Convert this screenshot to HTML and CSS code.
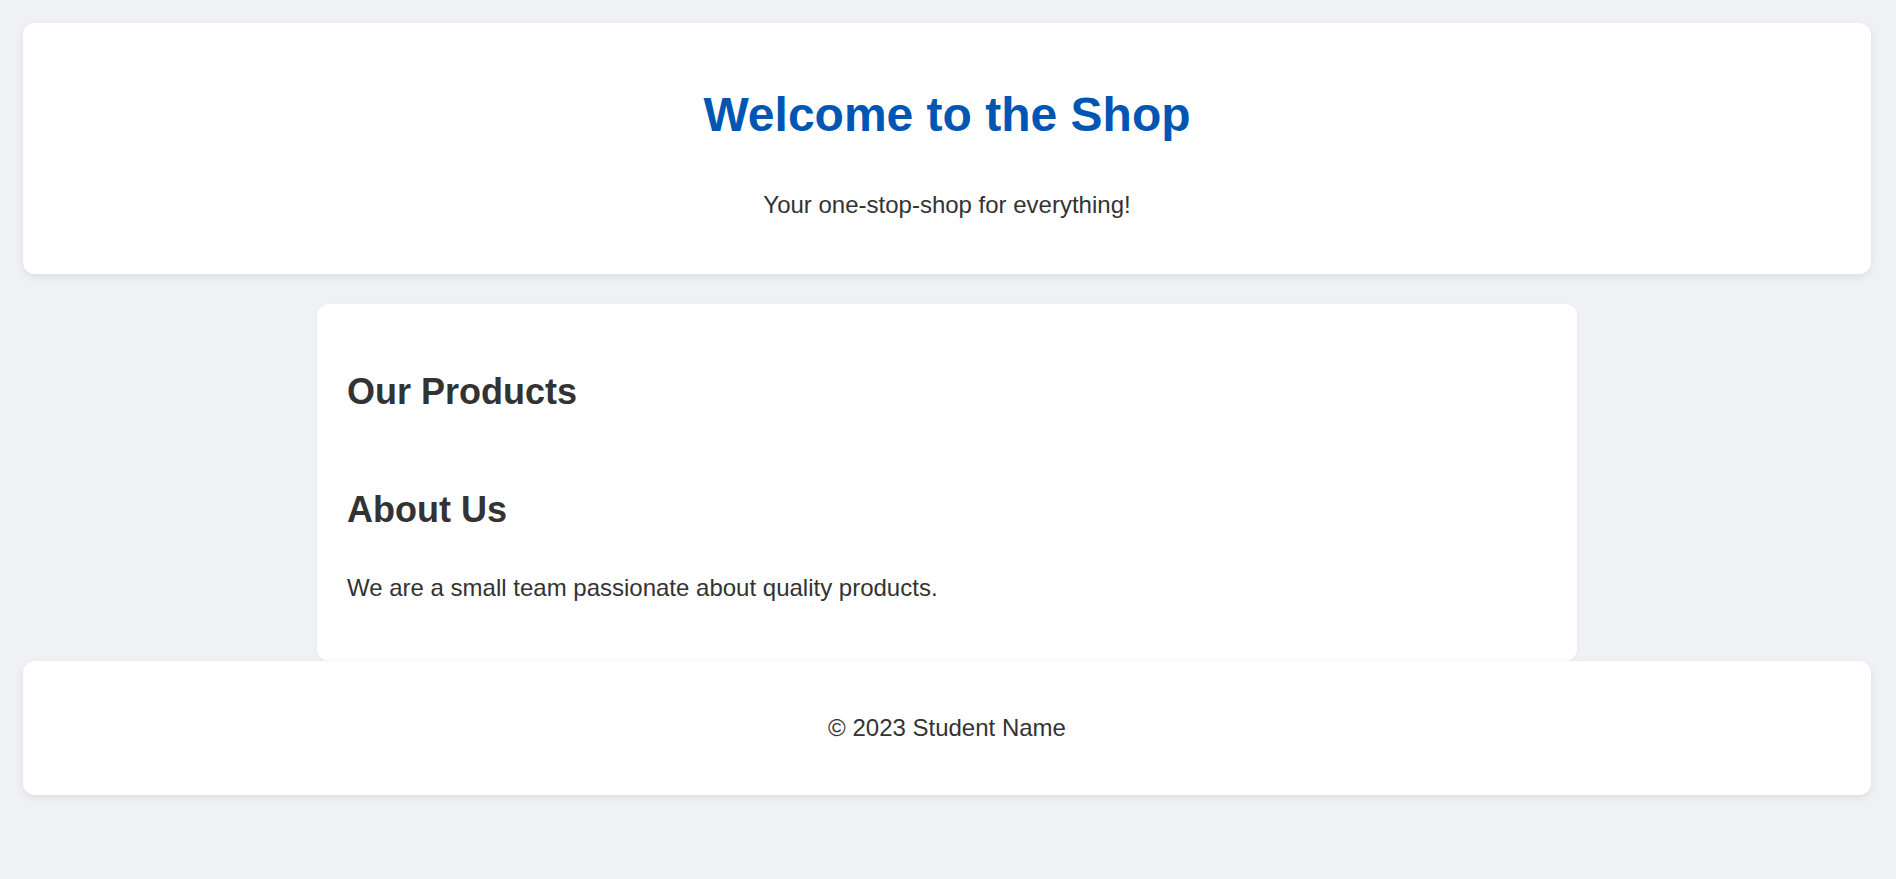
FILE: index.html
```html
<!DOCTYPE html>
<html lang="en">
<head>
<meta charset="utf-8">
<title>Welcome to the Shop</title>
<link rel="stylesheet" href="styles.css">
</head>
<body>
<div class="page">
  <header class="site-header">
    <h1 class="site-title">Welcome to the Shop</h1>
    <p class="tagline">Your one-stop-shop for everything!</p>
  </header>
  <main class="content">
    <section class="section products">
      <h2 class="section-title">Our Products</h2>
      <div class="product-grid"></div>
    </section>
    <section class="section about">
      <h2 class="section-title">About Us</h2>
      <p class="text">We are a small team passionate about quality products.</p>
    </section>
  </main>
  <footer class="site-footer">
    <p class="text">&copy; 2023 Student Name</p>
  </footer>
</div>
</body>
</html>
```

FILE: styles.css
```css
html, body {
  margin: 0;
  padding: 0;
}

body {
  background: #f0f1f5;
  color: #333333;
  font-family: "Liberation Sans", Arial, sans-serif;
  font-size: 24px;
  line-height: 1.6;
}

.page {
  padding: 22.5px 25px 22px 23px;
  display: flex;
  flex-direction: column;
  align-items: center;
}

.site-header,
.site-footer {
  align-self: stretch;
  background: #ffffff;
  border-radius: 12px;
  box-shadow: 0 3px 8px rgba(0, 0, 0, 0.08);
  text-align: center;
}

.site-header {
  padding: 20px 30px 28px;
}

.site-title {
  margin: 34px 0 33px;
  font-size: 48px;
  font-weight: 700;
  line-height: 1.6;
  color: #0056b3;
}

.tagline {
  margin: 0 0 21px;
}

.content {
  width: 1260px;
  box-sizing: border-box;
  margin-top: 30px;
  padding: 30px 30px 29px;
  background: #ffffff;
  border-radius: 12px;
  box-shadow: 0 1px 4px rgba(0, 0, 0, 0.04);
}

.section {
  display: flow-root;
}

.section-title {
  margin: 30px 0;
  font-size: 36px;
  font-weight: 700;
  line-height: 1.6;
}

.products .section-title {
  margin-top: 29px;
  margin-bottom: 31px;
}

.text {
  margin: 24px 0;
}

.about .text {
  margin-top: 27px;
  margin-bottom: 25px;
}

.site-footer {
  padding: 0 24px;
  display: flow-root;
}

.site-footer .text {
  margin: 47.5px 0 48px;
}
```
